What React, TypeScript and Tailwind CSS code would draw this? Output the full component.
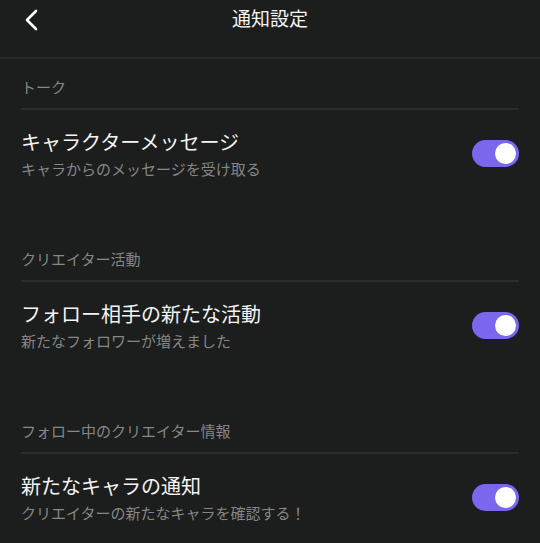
import React from 'react';

const Toggle: React.FC<{ on?: boolean }> = ({ on = true }) => (
  <div
    className={`w-[47px] h-[27px] rounded-full flex items-center px-[3px] shrink-0 ${
      on ? 'bg-[#7a67ee] justify-end' : 'bg-[#3a3b3b] justify-start'
    }`}
  >
    <div className="w-[21px] h-[21px] rounded-full bg-white" />
  </div>
);

const Section: React.FC<{ label: string; title: string; sub: string }> = ({ label, title, sub }) => (
  <section className="px-[21px]">
    <div className="pt-[18px] pb-[11px] text-[15px] leading-[20px] text-[#868787] border-b-2 border-[#2b2c2c]">
      {label}
    </div>
    <div className="flex items-center justify-between pt-[18px] pb-[52px]">
      <div className="flex flex-col gap-[3px]">
        <div className="text-[20px] leading-[28px] text-[#f4f4f4]">{title}</div>
        <div className="text-[15px] leading-[20px] text-[#868787]">{sub}</div>
      </div>
      <Toggle />
    </div>
  </section>
);

const App: React.FC = () => {
  const sections = [
    { label: 'トーク', title: 'キャラクターメッセージ', sub: 'キャラからのメッセージを受け取る' },
    { label: 'クリエイター活動', title: 'フォロー相手の新たな活動', sub: '新たなフォロワーが増えました' },
    { label: 'フォロー中のクリエイター情報', title: '新たなキャラの通知', sub: 'クリエイターの新たなキャラを確認する！' },
  ];

  return (
    <div
      className="w-[540px] h-[543px] overflow-hidden bg-[#1c1d1d]"
      style={{ fontFamily: '"Noto Sans CJK JP", "Noto Sans", sans-serif' }}
    >
      <header className="relative h-[59px] flex items-center justify-center border-b-2 border-[#282929] pb-[2px]">
        <button className="absolute left-[22px] top-[8px] p-0 text-white">
          <svg width="18" height="24" viewBox="0 0 18 24" fill="none">
            <path d="M14 3 L5 12 L14 21" stroke="currentColor" strokeWidth="2.6" strokeLinecap="round" strokeLinejoin="round" />
          </svg>
        </button>
        <h1 className="text-[19px] leading-[26px] text-[#f4f4f4] -mt-[20px]">通知設定</h1>
      </header>
      {sections.map((s, i) => (
        <Section key={i} {...s} />
      ))}
    </div>
  );
};

export default App;
